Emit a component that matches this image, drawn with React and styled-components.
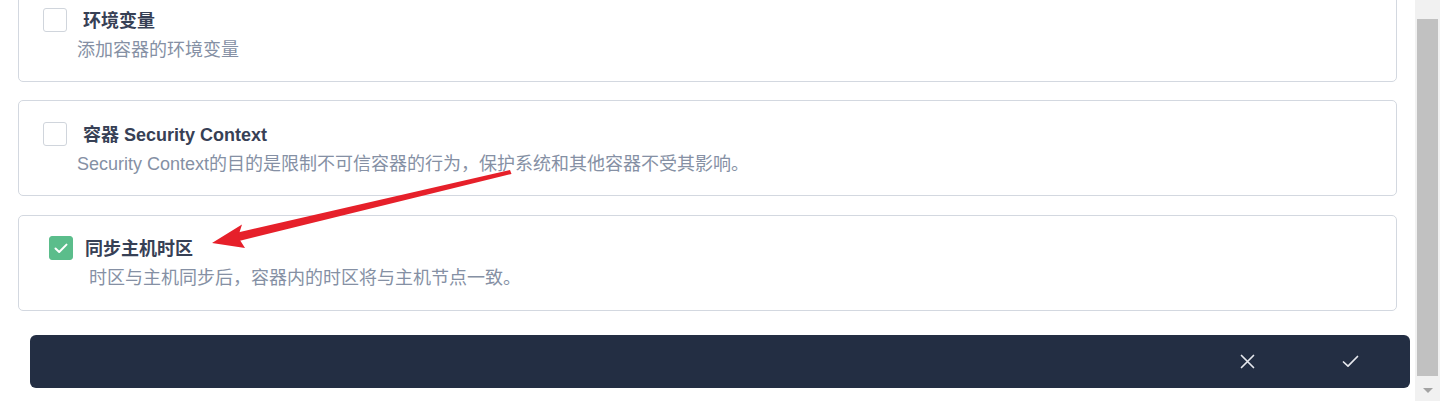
import React from 'react';
import styled, { createGlobalStyle } from 'styled-components';

const GlobalStyle = createGlobalStyle`
    html, body {
        margin : 0;
        padding : 0;
        background : #ffffff;
        overflow : hidden;
    }
    body {
        font-family : "Liberation Sans", "Noto Sans CJK SC", sans-serif;
    }
`;

// 전체 화면: 본문 + 스크롤바
const Page = styled.div`
    display : flex;
    width : 1440px;
    height : 401px;
    overflow : hidden;
    position : relative;
`;

const Main = styled.div`
    flex : 1;
    height : 401px;
    overflow : hidden;
`;

// 스크롤된 상태를 흉내냄
const Content = styled.div`
    display : flex;
    flex-direction : column;
    margin-top : -14px;
`;

const Card = styled.div`
    margin : 0 18px ${p => p.$gap}px 18px;
    border : 1px solid #d3d8e0;
    border-radius : 5px;
    padding : ${p => p.$checked ? '20px 24px 20px 30px' : '21px 24px 19px 24px'};
    display : flex;
    flex-direction : column;
    gap : 6px;
`;

const Header = styled.div`
    display : flex;
    align-items : center;
    gap : ${p => p.$checked ? 12 : 16}px;
    height : 24px;
`;

const Box = styled.span`
    width : 24px;
    height : 24px;
    box-sizing : border-box;
    border-radius : 3px;
    border : 1px solid ${p => p.$checked ? '#5bbd8b' : '#d0d5dc'};
    background : ${p => p.$checked ? '#5bbd8b' : '#ffffff'};
    display : flex;
    align-items : center;
    justify-content : center;
    flex-shrink : 0;
`;

const Title = styled.span`
    font-size : 18px;
    font-weight : 700;
    color : #374055;
    line-height : 24px;
    padding-top : 2px;
`;

const Desc = styled.div`
    font-size : 18px;
    color : #8590a4;
    line-height : 24px;
    padding-left : ${p => p.$checked ? 40 : 34}px;
`;

const Footer = styled.div`
    margin : 5px 5px 0 30px;
    height : 53px;
    background : #232e43;
    border-radius : 6px;
    display : flex;
    align-items : center;
    justify-content : flex-end;
    padding-right : 50px;
    gap : 83px;
`;

const IconButton = styled.span`
    width : 20px;
    height : 20px;
    display : flex;
    align-items : center;
    justify-content : center;
    color : #e6e8ee;
`;

// 가짜 스크롤바
const ScrollTrack = styled.div`
    width : 25px;
    height : 401px;
    background : #f1f1f1;
    display : flex;
    flex-direction : column;
    align-items : center;
    padding-top : 19px;
    box-sizing : border-box;
`;

const ScrollThumb = styled.div`
    width : 21px;
    height : 357px;
    background : #c1c1c1;
`;

const ScrollArrow = styled.div`
    margin-top : 12px;
    width : 0;
    height : 0;
    border-left : 5px solid transparent;
    border-right : 5px solid transparent;
    border-top : 5px solid #a3a3a3;
`;

// 빨간 화살표 (주석)
const ArrowLayer = styled.svg`
    position : absolute;
    left : 0;
    top : 0;
    pointer-events : none;
`;

const CheckMark = () => (
    <svg width="14" height="11" viewBox="0 0 14 11" fill="none">
        <path d="M1.5 5.5 L5.2 9 L12.5 1.6" stroke="#ffffff" strokeWidth="2" strokeLinecap="round" strokeLinejoin="round" />
    </svg>
);

const options = [
    { title: '环境变量', desc: '添加容器的环境变量', checked: false, gap: 18 },
    { title: '容器 Security Context', desc: 'Security Context的目的是限制不可信容器的行为，保护系统和其他容器不受其影响。', checked: false, gap: 19 },
    { title: '同步主机时区', desc: '时区与主机同步后，容器内的时区将与主机节点一致。', checked: true, gap: 19 },
];

const App = () => {
    return (
        <Page>
            <GlobalStyle />
            <Main>
                <Content>
                    {options.map(o => (
                        <Card key={o.title} $checked={o.checked} $gap={o.gap}>
                            <Header $checked={o.checked}>
                                <Box $checked={o.checked}>{o.checked && <CheckMark />}</Box>
                                <Title>{o.title}</Title>
                            </Header>
                            <Desc $checked={o.checked}>{o.desc}</Desc>
                        </Card>
                    ))}
                    <Footer>
                        <IconButton>
                            <svg width="15" height="15" viewBox="0 0 15 15" fill="none">
                                <path d="M1.5 1.5 L13.5 13.5 M13.5 1.5 L1.5 13.5" stroke="currentColor" strokeWidth="1.7" strokeLinecap="round" />
                            </svg>
                        </IconButton>
                        <IconButton>
                            <svg width="17" height="13" viewBox="0 0 17 13" fill="none">
                                <path d="M1.5 7 L6 11.2 L15.5 1.5" stroke="currentColor" strokeWidth="1.7" strokeLinecap="round" strokeLinejoin="round" />
                            </svg>
                        </IconButton>
                    </Footer>
                </Content>
            </Main>
            <ScrollTrack>
                <ScrollThumb />
                <ScrollArrow />
            </ScrollTrack>
            <ArrowLayer width="1440" height="401">
                <polygon points="510,170 511.5,174 237,241.5 233.5,233.5" fill="#e6202a" />
                <polygon points="212,243 242,224.5 238,237 245,248" fill="#e6202a" />
            </ArrowLayer>
        </Page>
    );
};

export default App;
